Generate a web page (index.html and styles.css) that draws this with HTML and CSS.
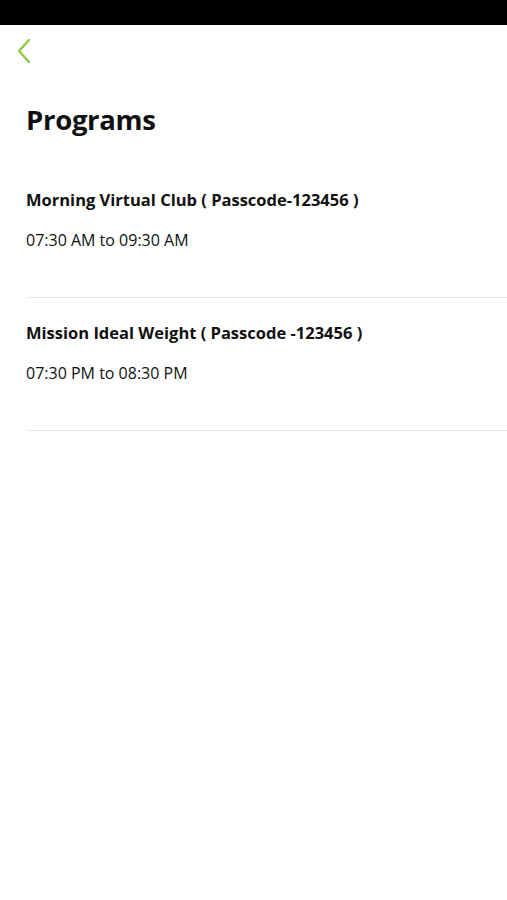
FILE: index.html
```html
<!DOCTYPE html>
<html>
<head>
	<title>Programs</title>
	<meta name="viewport" content="width=device-width, initial-scale=1">
	<link rel="stylesheet" href="styles.css">
</head>
<body>
	<div class="status-bar"></div>
	<div class="top-bar">
		<a class="back-btn" href="#">
			<svg width="16" height="26" viewBox="0 0 16 26"><path d="M13 2 L3 13 L13 24" fill="none" stroke="#8cc84b" stroke-width="2.4" stroke-linecap="round" stroke-linejoin="round"/></svg>
		</a>
	</div>
	<h1 class="page-title">Programs</h1>
	<div class="program-list">
		<div class="program">
			<p class="program-name">Morning Virtual Club ( Passcode-123456 )</p>
			<p class="program-time">07:30 AM to 09:30 AM</p>
		</div>
		<div class="program">
			<p class="program-name">Mission Ideal Weight ( Passcode -123456 )</p>
			<p class="program-time">07:30 PM to 08:30 PM</p>
		</div>
	</div>
</body>
</html>
```

FILE: styles.css
```css
body {
	margin: 0;
	padding: 0;
	font-family: "Open Sans", "Noto Sans", sans-serif;
	background-color: #fff;
	color: #111;
}
.status-bar {
	height: 25px;
	background-color: #000;
}
.top-bar {
	height: 52px;
	display: flex;
	align-items: center;
	padding-left: 16px;
}
.back-btn {
	display: flex;
}
.page-title {
	margin: 0;
	padding: 23px 26px 0;
	font-size: 27.5px;
	font-weight: 700;
	letter-spacing: -0.3px;
	line-height: 40px;
}
.program-list {
	margin-top: 49px;
	margin-left: 26px;
}
.program {
	border-bottom: 1px solid #e9e9e9;
	padding: 24px 0 46px;
}
.program:first-child {
	padding-top: 0;
}
.program-name {
	margin: 0;
	font-size: 16.5px;
	font-weight: 700;
	line-height: 22px;
}
.program-time {
	margin: 0;
	margin-top: 18px;
	font-size: 16px;
	line-height: 22px;
}
```
